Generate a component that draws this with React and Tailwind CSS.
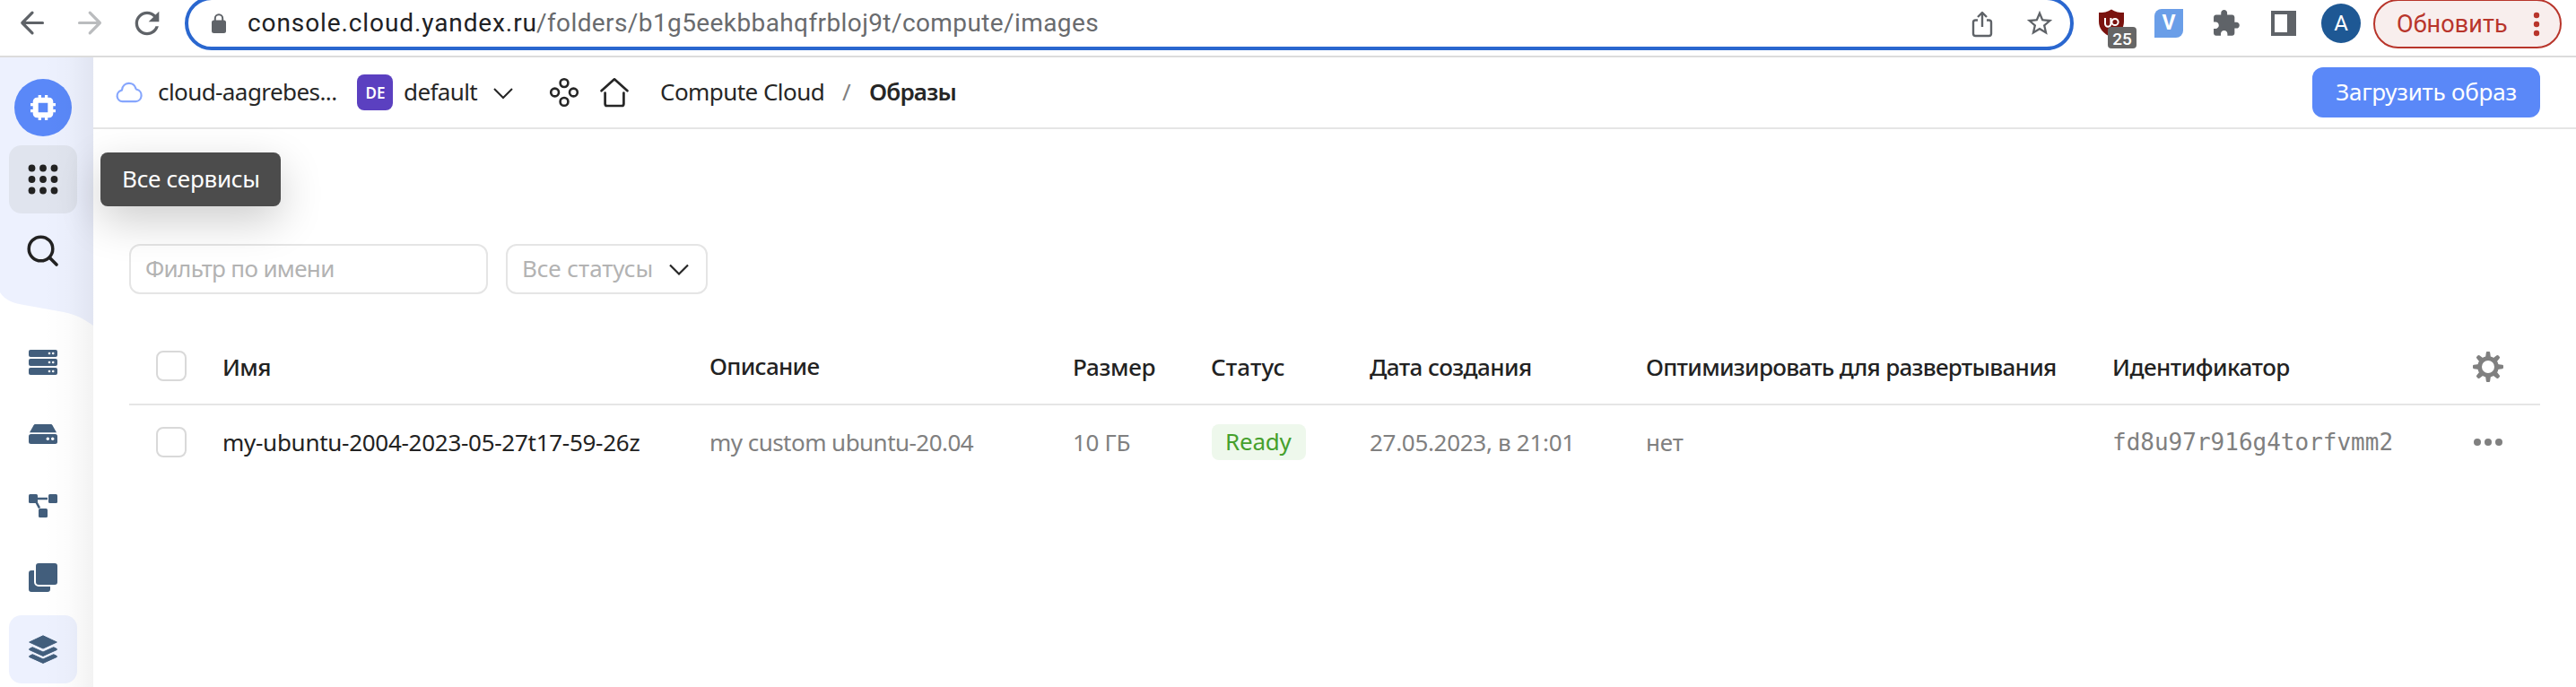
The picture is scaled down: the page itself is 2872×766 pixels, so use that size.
import React from "react";

function Icon({ x, y, w, h, children, className = "" }) {
  return (
    <svg
      width={w}
      height={h}
      viewBox={`${x} ${y} ${w} ${h}`}
      fill="none"
      className={`shrink-0 ${className}`}
    >
      {children}
    </svg>
  );
}

function BrowserBar() {
  return (
    <div className="h-16 shrink-0 overflow-hidden border-b-2 border-[#dcdcdc] bg-white font-[Roboto,'Liberation_Sans',sans-serif]">
      <div className="flex h-[52px] items-center pl-5">
        <Icon x={20} y={10} w={32} h={32}>
          <path d="M47.5 25.5H25M36 14.2 24.8 25.5 36 36.8" stroke="#5f6368" strokeWidth="3.2" strokeLinecap="round" strokeLinejoin="round" />
        </Icon>
        <Icon x={84} y={10} w={32} h={32} className="ml-8">
          <path d="M88.5 25.5H111M100.200 14.2 111.400 25.5 100.200 36.8" stroke="#babcbe" strokeWidth="3.2" strokeLinecap="round" strokeLinejoin="round" />
        </Icon>
        <svg viewBox="0 0 24 24" className="ml-7 size-10 shrink-0 fill-[#5f6368]">
          <path d="M17.65 6.35C16.2 4.9 14.21 4 12 4c-4.420 0-7.990 3.580-7.990 8s3.570 8 7.990 8c3.730 0 6.840-2.550 7.730-6h-2.080c-.82 2.330-3.040 4-5.650 4-3.310 0-6-2.690-6-6s2.690-6 6-6c1.660 0 3.140.69 4.220 1.780L13 11h7V4l-2.350 2.350z" />
        </svg>
        <div className="ml-[22px] flex h-[60px] w-[2106px] shrink-0 items-center rounded-full border-4 border-[#2a67cf] bg-white pr-[17px] pl-6">
          <Icon x={234} y={14} w={20} h={24}>
            <rect x="236" y="22.500" width="16" height="14.500" rx="2.500" fill="#5f6368" />
            <path d="M239.800 23v-2.600a4.200 4.200 0 0 1 8.400 0V23" stroke="#5f6368" strokeWidth="2" />
          </Icon>
          <span className="ml-[22px] w-[322px] text-[28px] leading-9 tracking-[0.9px] whitespace-nowrap text-[#202124]">
            console.cloud.yandex.ru
          </span>
          <span className="text-[28px] leading-9 tracking-[0.4px] whitespace-nowrap text-[#696b6e]">
            /folders/b1g5eekbbahqfrbloj9t/compute/images
          </span>
          <Icon x={2196} y={10} w={28} h={32} className="ml-auto">
            <path d="M2205 22.500h-2.500a2.500 2.500 0 0 0-2.500 2.500v12.500a2.500 2.500 0 0 0 2.500 2.500h15a2.500 2.500 0 0 0 2.500-2.500V25a2.500 2.500 0 0 0-2.500-2.500H2215M2210 30V14.500M2205 19l5-5 5 5" stroke="#5f6368" strokeWidth="2.400" strokeLinejoin="round" />
          </Icon>
          <svg viewBox="0 0 24 24" className="ml-[33px] size-[34px] shrink-0 fill-[#5f6368]">
            <path d="M22 9.240l-7.190-.62L12 2 9.190 8.630 2 9.240l5.460 4.730L5.820 21 12 17.270 18.180 21l-1.630-7.030L22 9.240zM12 15.400l-3.760 2.270 1-4.280-3.320-2.880 4.380-.38L12 6.100l1.710 4.040 4.380.38-3.320 2.880 1 4.280L12 15.400z" />
          </svg>
        </div>
        <Icon x={2336} y={-4} w={48} h={60} className="ml-6">
          <path d="M2354 10.500c4 3 9 3.500 14 3.500v10c0 8-5 13-14 18-9-5-14-10-14-18V14c5 0 10-.5 14-3.500z" fill="#7a130f" />
          <path d="M2347 20v6.500a3.200 3.200 0 0 0 6.400 0V20M2353.400 20v8" stroke="#fff" strokeWidth="2" />
          <circle cx="2358" cy="24.500" r="3.600" stroke="#fff" strokeWidth="2" />
          <rect x="2350" y="30" width="32" height="24" rx="4" fill="#666" />
          <text x="2366" y="50" textAnchor="middle" fill="#fff" className="text-[19px] font-medium">25</text>
        </Icon>
        <div className="ml-[18px] flex size-8 shrink-0 items-center justify-center rounded-tl-lg rounded-br-lg bg-[#6a9ee8] text-[23px] leading-8 font-bold text-white">
          V
        </div>
        <Icon x={2466} y={10} w={32} h={32} className="ml-8">
          <path transform="translate(2465.300 9.700) scale(1.370)" d="M20.500 11H19V7c0-1.100-.9-2-2-2h-4V3.500C13 2.120 11.880 1 10.500 1S8 2.120 8 3.500V5H4c-1.100 0-1.990.9-1.990 2v3.800H3.500c1.490 0 2.700 1.210 2.700 2.700s-1.210 2.700-2.700 2.700H2V20c0 1.100.9 2 2 2h3.800v-1.500c0-1.490 1.210-2.700 2.700-2.700 1.490 0 2.700 1.210 2.700 2.700V22H17c1.100 0 2-.9 2-2v-4h1.500c1.380 0 2.500-1.120 2.500-2.500S21.880 11 20.500 11z" fill="#5f6368" />
        </Icon>
        <Icon x={2532} y={12} w={28} h={28} className="ml-[34px]">
          <rect x="2532" y="12" width="28" height="28" fill="#5f6368" />
          <rect x="2536" y="16" width="14" height="20" fill="#fff" />
        </Icon>
        <div className="ml-7 flex size-11 shrink-0 items-center justify-center rounded-full bg-[#1e5894] text-[24px] leading-none text-white">
          A
        </div>
        <div className="mt-px ml-[14px] flex h-[55px] w-[210px] shrink-0 items-center rounded-full border-2 border-[#b8352b] bg-[#f8eeed] pl-6">
          <span className="text-[27px] leading-9 tracking-[0.11px] text-[#b8352b]">Обновить</span>
          <Icon x={2822} y={10} w={12} h={32} className="ml-auto mr-[20px]">
            <g fill="#b8352b">
              <circle cx="2828" cy="16" r="3.200" />
              <circle cx="2828" cy="26" r="3.200" />
              <circle cx="2828" cy="36" r="3.200" />
            </g>
          </Icon>
        </div>
      </div>
    </div>
  );
}

function Tile({ children, className = "" }) {
  return (
    <div className={`flex size-[76px] shrink-0 items-center justify-center rounded-[14px] ${className}`}>
      {children}
    </div>
  );
}

function Sidebar() {
  return (
    <div className="relative h-[702px] w-[104px] shrink-0 overflow-hidden bg-white">
      <svg className="absolute inset-0" width="104" height="702" viewBox="0 64 104 702">
        <path d="M0 64h104v299c-10-7-18-12-33-15L24 339.500C10 337 4 332 0 326z" fill="#edf1fe" />
      </svg>
      <div className="relative flex flex-col gap-1 pt-[18px] pl-[10px]">
        <Tile>
          <Icon x={16} y={88} w={64} h={64}>
            <circle cx="48" cy="120" r="32" fill="#5a88f8" />
            <path d="M44.300 106v28M51.600 106v28M34 116.600h28M34 123.700h28" stroke="#fff" strokeWidth="3.300" />
            <rect x="39.700" y="111.700" width="16.600" height="16.600" rx="1.500" fill="#5a88f8" stroke="#fff" strokeWidth="6" />
          </Icon>
        </Tile>
        <Tile className="bg-[#e0e4ee]">
          <Icon x={31} y={183} w={34} h={34}>
            {[187.500, 200, 212.500].map((cy) =>
              [35.500, 48, 60.500].map((cx) => (
                <circle key={`${cx}-${cy}`} cx={cx} cy={cy} r="3.900" fill="#222" />
              ))
            )}
          </Icon>
        </Tile>
        <Tile>
          <Icon x={28} y={260} w={40} h={40}>
            <circle cx="45.500" cy="277.500" r="13.300" stroke="#222" strokeWidth="3.500" />
            <path d="M55.500 287.500 63 295" stroke="#222" strokeWidth="3.700" strokeLinecap="round" />
          </Icon>
        </Tile>
        <div className="h-10" />
        <Tile>
          <Icon x={32} y={390} w={32} h={28}>
            {[390, 400, 410].map((y) => (
              <g key={y}>
                <rect x="32" y={y} width="32" height="8" rx="2" fill="#425e7c" />
                <circle cx="55" cy={y + 4} r="1.300" fill="#fff" />
                <circle cx="59.200" cy={y + 4} r="1.300" fill="#fff" />
              </g>
            ))}
          </Icon>
        </Tile>
        <Tile>
          <Icon x={32} y={473} w={32} h={22}>
            <path d="M39.500 473h17c1 0 1.500.5 2 1.200l4.500 8H33l4.500-8c.5-.7 1-1.200 2-1.200z" fill="#425e7c" />
            <rect x="32" y="484" width="32" height="11" rx="2.500" fill="#425e7c" />
            <circle cx="53.300" cy="489.200" r="1.700" fill="#fff" />
            <circle cx="58.700" cy="489.200" r="1.700" fill="#fff" />
          </Icon>
        </Tile>
        <Tile>
          <Icon x={32} y={551} w={32} h={26}>
            <path d="M40 556h13M40 559l4 7.500" stroke="#425e7c" strokeWidth="2.600" />
            <rect x="32" y="551" width="10" height="10" rx="1.500" fill="#425e7c" />
            <rect x="54" y="551" width="10" height="10" rx="1.500" fill="#425e7c" />
            <rect x="43" y="567" width="10" height="10" rx="1.500" fill="#425e7c" />
          </Icon>
        </Tile>
        <Tile>
          <Icon x={32} y={628} w={32} h={32}>
            <path d="M35 636h3v13a5 5 0 0 0 5 5h13v3a3 3 0 0 1-3 3H35a3 3 0 0 1-3-3v-18a3 3 0 0 1 3-3z" fill="#425e7c" />
            <rect x="40" y="628" width="24" height="24" rx="3" fill="#425e7c" />
          </Icon>
        </Tile>
        <Tile className="bg-[#edf1fe]">
          <Icon x={32} y={708} w={32} h={32}>
            <g fill="#425e7c" stroke="#425e7c" strokeLinejoin="round">
              <path d="M48 708.800 63.300 716 48 723 32.700 716z" />
              <path d="M36.200 721.700 48 727l11.800-5.300 3.500 1.800v1L48 731.400l-15.300-6.900v-1z" />
              <path d="M36.200 729.700 48 735l11.800-5.300 3.500 1.800v1L48 739.400l-15.300-6.900v-1z" />
            </g>
          </Icon>
        </Tile>
      </div>
      <div className="absolute inset-y-0 right-0 w-14 bg-linear-to-r from-black/0 via-black/[0.012] to-black/[0.05]" />
    </div>
  );
}

function Header() {
  return (
    <div className="flex h-20 shrink-0 items-center border-b-2 border-[#e5e5e5] bg-white pr-10 pl-[25px] text-[26px] leading-9 whitespace-nowrap text-[#262626]">
      <Icon x={129} y={91} w={30} h={24}>
        <path d="M136.500 113.200h14.700a6.800 6.800 0 0 0 1.200-13.400c-.6-.2-.9-.6-1-1.200a7.800 7.800 0 0 0-15.300 1.200c-.1.700-.5 1-1.100 1.100a6.300 6.300 0 0 0 1.500 12.300z" stroke="#86a6fd" strokeWidth="2.200" />
      </Icon>
      <span className="mb-[2px] ml-[17px] w-[222px] tracking-[-0.58px]">cloud-aagrebes...</span>
      <span className="flex size-10 shrink-0 items-center justify-center rounded-lg bg-[#5b40c0] pl-px text-[17px] leading-none font-semibold text-white">
        DE
      </span>
      <span className="mb-[2px] ml-3 w-[98px] tracking-[-0.61px]">default</span>
      <Icon x={548} y={92} w={26} h={22}>
        <path d="M551 99l10 10 10-10" stroke="#262626" strokeWidth="2" />
      </Icon>
      <Icon x={612} y={86} w={34} h={34} className="ml-[38px]">
        <g stroke="#262626" strokeWidth="2.600">
          <circle cx="629" cy="92.600" r="4.400" />
          <circle cx="629" cy="113.400" r="4.400" />
          <circle cx="618.600" cy="103" r="4.400" />
          <circle cx="639.400" cy="103" r="4.400" />
        </g>
      </Icon>
      <Icon x={668} y={86} w={34} h={34} className="ml-[22px]">
        <path d="M670.500 101.200 685 88.300l14.500 12.900M674.600 103.500v12.200q0 2.300 2.300 2.300h16.200q2.300 0 2.300-2.300v-12.200" stroke="#262626" strokeWidth="2.700" strokeLinecap="round" strokeLinejoin="round" />
      </Icon>
      <span className="mb-[2px] ml-[34px] w-[203px] tracking-[-0.55px]">Compute Cloud</span>
      <span className="mb-[2px] w-[30px] text-[#808080]">/</span>
      <span className="mb-[2px] font-semibold tracking-[-0.8px]">Образы</span>
      <button className="ml-auto h-14 w-[254px] rounded-xl bg-[#5a88f8] pb-[2px] tracking-[-0.21px] text-white">
        Загрузить образ
      </button>
    </div>
  );
}

function Checkbox() {
  return <div className="ml-[30px] size-[34px] rounded-lg border-2 border-[#d9d9d9] bg-white" />;
}

const GRID = "grid grid-cols-[104px_543px_405px_154px_177px_308px_520px_397px_80px] items-center";

function ImagesTable() {
  return (
    <div className="text-[26px] leading-9 whitespace-nowrap">
      <div className={`${GRID} h-[86px] border-b-2 border-[#e5e5e5] font-medium text-[#222]`}>
        <Checkbox />
        <span className="pt-[2px] tracking-[-0.6px]">Имя</span>
        <span className="tracking-[-0.68px]">Описание</span>
        <span className="pt-[2px] tracking-[-0.3px]">Размер</span>
        <span className="pt-[2px] tracking-[0.14px]">Статус</span>
        <span className="pt-[2px] tracking-[-0.57px]">Дата создания</span>
        <span className="pt-[2px] tracking-[-0.7px]">Оптимизировать для развертывания</span>
        <span className="pt-[2px] tracking-[-0.5px]">Идентификатор</span>
        <div className="flex justify-end pt-[2px] pr-10">
          <Icon x={2756} y={391} w={36} h={36}>
            <circle cx="2774" cy="409" r="9.400" stroke="#808080" strokeWidth="4.800" />
            {[0, 45, 90, 135, 180, 225, 270, 315].map((a) => (
              <path key={a} transform={`rotate(${a} 2774 409)`} d="M2771 399l.8-5.800q.1-1.200 1.200-1.200h2q1.100 0 1.200 1.200l.8 5.800z" fill="#808080" />
            ))}
          </Icon>
        </div>
      </div>
      <div className={`${GRID} h-[82px] text-[#808080]`}>
        <Checkbox />
        <span className="tracking-[-0.28px] text-[#222]">my-ubuntu-2004-2023-05-27t17-59-26z</span>
        <span className="tracking-[-0.54px]">my custom ubuntu-20.04</span>
        <span className="tracking-[-0.31px]">10 ГБ</span>
        <span className="ml-px flex h-10 w-[105px] items-center rounded-lg bg-[#eef8ec] pb-[2px] pl-[15px] tracking-[-0.23px] text-[#45a02c]">
          Ready
        </span>
        <span className="tracking-[-0.3px]">27.05.2023, в 21:01</span>
        <span className="tracking-[-0.17px]">нет</span>
        <span className="font-['DejaVu_Sans_Mono',monospace]">fd8u97r916g4torfvmm2</span>
        <div className="flex justify-end pr-10">
          <Icon x={2756} y={484} w={36} h={20}>
            <g fill="#808080">
              <circle cx="2762" cy="494" r="4" />
              <circle cx="2774" cy="494" r="4" />
              <circle cx="2786" cy="494" r="4" />
            </g>
          </Icon>
        </div>
      </div>
    </div>
  );
}

export default function App() {
  return (
    <div className="relative flex h-[766px] w-[2872px] flex-col overflow-hidden bg-white font-['Noto_Sans','Liberation_Sans',sans-serif]">
      <BrowserBar />
      <div className="flex">
        <Sidebar />
        <div className="flex grow flex-col">
          <Header />
          <div className="flex flex-col px-10 pt-32 text-[26px] leading-9">
            <div className="flex gap-5">
              <div className="flex h-14 w-[400px] items-center rounded-xl border-2 border-[#e5e5e5] pb-[2px] pl-4 tracking-[-0.65px] text-[#b3b3b3]">
                Фильтр по имени
              </div>
              <div className="flex h-14 w-[225px] items-center justify-between rounded-xl border-2 border-[#e5e5e5] pr-[17px] pl-[16px] text-[#b3b3b3]">
                <span className="pb-[2px] tracking-[-0.05px]">Все статусы</span>
                <Icon x={744} y={290} w={26} h={22}>
                  <path d="M747 296.500l10 10 10-10" stroke="#262626" strokeWidth="2.200" />
                </Icon>
              </div>
            </div>
            <div className="mt-[38px]">
              <ImagesTable />
            </div>
          </div>
        </div>
      </div>
      <div className="absolute top-[170px] left-[112px] flex h-[60px] w-[201px] items-center rounded-lg bg-[#4c4c4c] pb-[2px] pl-6 text-[26px] leading-9 tracking-[-0.25px] whitespace-nowrap text-white shadow-[0_16px_48px_rgba(0,0,0,0.2)]">
        Все сервисы
      </div>
    </div>
  );
}
